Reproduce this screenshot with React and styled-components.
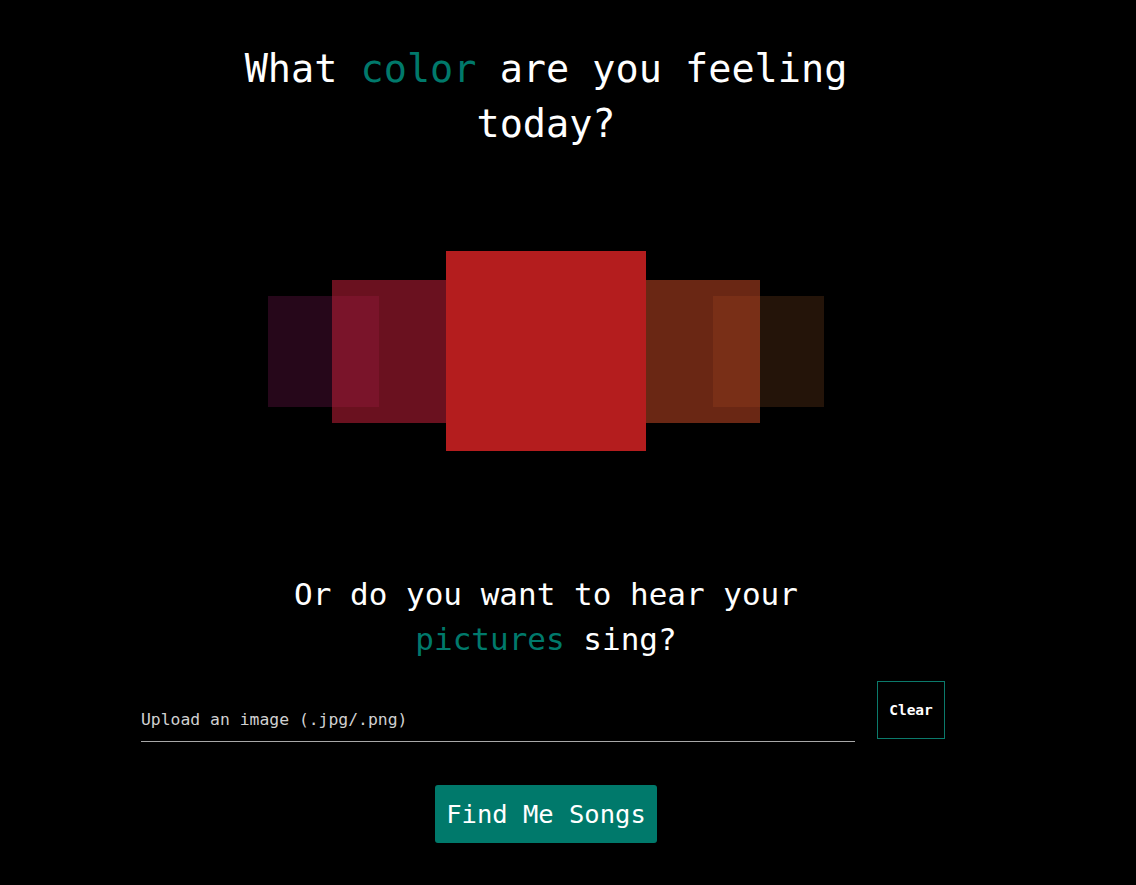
import styled, { createGlobalStyle } from 'styled-components'

const GlobalStyle = createGlobalStyle`
  body {
    margin: 0;
    background: #000;
    color: #fff;
    font-family: "DejaVu Sans Mono", "Liberation Mono", monospace;
  }
`

const swatches = [
  { size: 111, color: '#26071a', z: 1, ml: 0 },
  { size: 143, color: 'rgba(186, 30, 54, 0.57)', z: 2, ml: -47 },
  { size: 200, color: '#b41d1e', z: 3, ml: -29 },
  { size: 143, color: 'rgba(189, 70, 36, 0.56)', z: 2, ml: -29 },
  { size: 111, color: '#241409', z: 1, ml: -47 },
]

const App = () => {
  return (
    <>
      <GlobalStyle />
      <Page>
        <Title>
          What <Accent>color</Accent> are you feeling today?
        </Title>

        <Palette>
          {swatches.map((s, i) => (
            <Swatch key={i} $size={s.size} $color={s.color} $z={s.z} $ml={s.ml} />
          ))}
        </Palette>

        <SubTitle>
          Or do you want to hear your <Accent>pictures</Accent> sing?
        </SubTitle>

        <UploadRow>
          <UploadField>
            <UploadLabel>Upload an image (.jpg/.png)</UploadLabel>
          </UploadField>
          <ClearButton>Clear</ClearButton>
        </UploadRow>

        <FindButton>Find Me Songs</FindButton>
      </Page>
    </>
  )
}

export default App

const Page = styled.div`
  width: 1092px;
  display: flex;
  flex-direction: column;
  align-items: center;
  padding-bottom: 40px;
`

const Title = styled.h1`
  margin: 41px 0 0;
  max-width: 640px;
  text-align: center;
  font-weight: 400;
  font-size: 38.5px;
  line-height: 55px;
  color: #fff;
`

const Accent = styled.span`
  color: #00796b;
`

const Palette = styled.div`
  margin-top: 100px;
  height: 200px;
  display: flex;
  align-items: center;
  justify-content: center;
`

const Swatch = styled.div`
  flex: none;
  width: ${p => p.$size}px;
  height: ${p => p.$size}px;
  background: ${p => p.$color};
  z-index: ${p => p.$z};
  margin-left: ${p => p.$ml}px;
`

const SubTitle = styled.h2`
  margin: 121px 0 0;
  max-width: 530px;
  text-align: center;
  font-weight: 400;
  font-size: 31px;
  line-height: 45px;
  color: #fff;
`

const UploadRow = styled.div`
  margin: 19px 6px 0 0;
  width: 804px;
  display: flex;
  align-items: flex-start;
  gap: 22px;
`

const UploadField = styled.div`
  flex: 1;
  display: flex;
  align-items: flex-end;
  padding-bottom: 11px;
  box-sizing: border-box;
  border-bottom: 1px solid #a8a8a8;
  height: 61px;
`

const UploadLabel = styled.span`
  font-size: 16.4px;
  line-height: 20px;
  color: #d0d0d0;
`

const ClearButton = styled.button`
  width: 68px;
  height: 58px;
  background: #000;
  border: 1px solid #0b7a6b;
  color: #fff;
  font-family: inherit;
  font-weight: 700;
  font-size: 14.5px;
  padding: 0;
  cursor: pointer;
`

const FindButton = styled.button`
  margin-top: 43px;
  width: 222px;
  height: 58px;
  background: #00796b;
  border: none;
  border-radius: 3px;
  color: #fff;
  font-family: inherit;
  font-size: 25.5px;
  padding: 0;
  cursor: pointer;
`
